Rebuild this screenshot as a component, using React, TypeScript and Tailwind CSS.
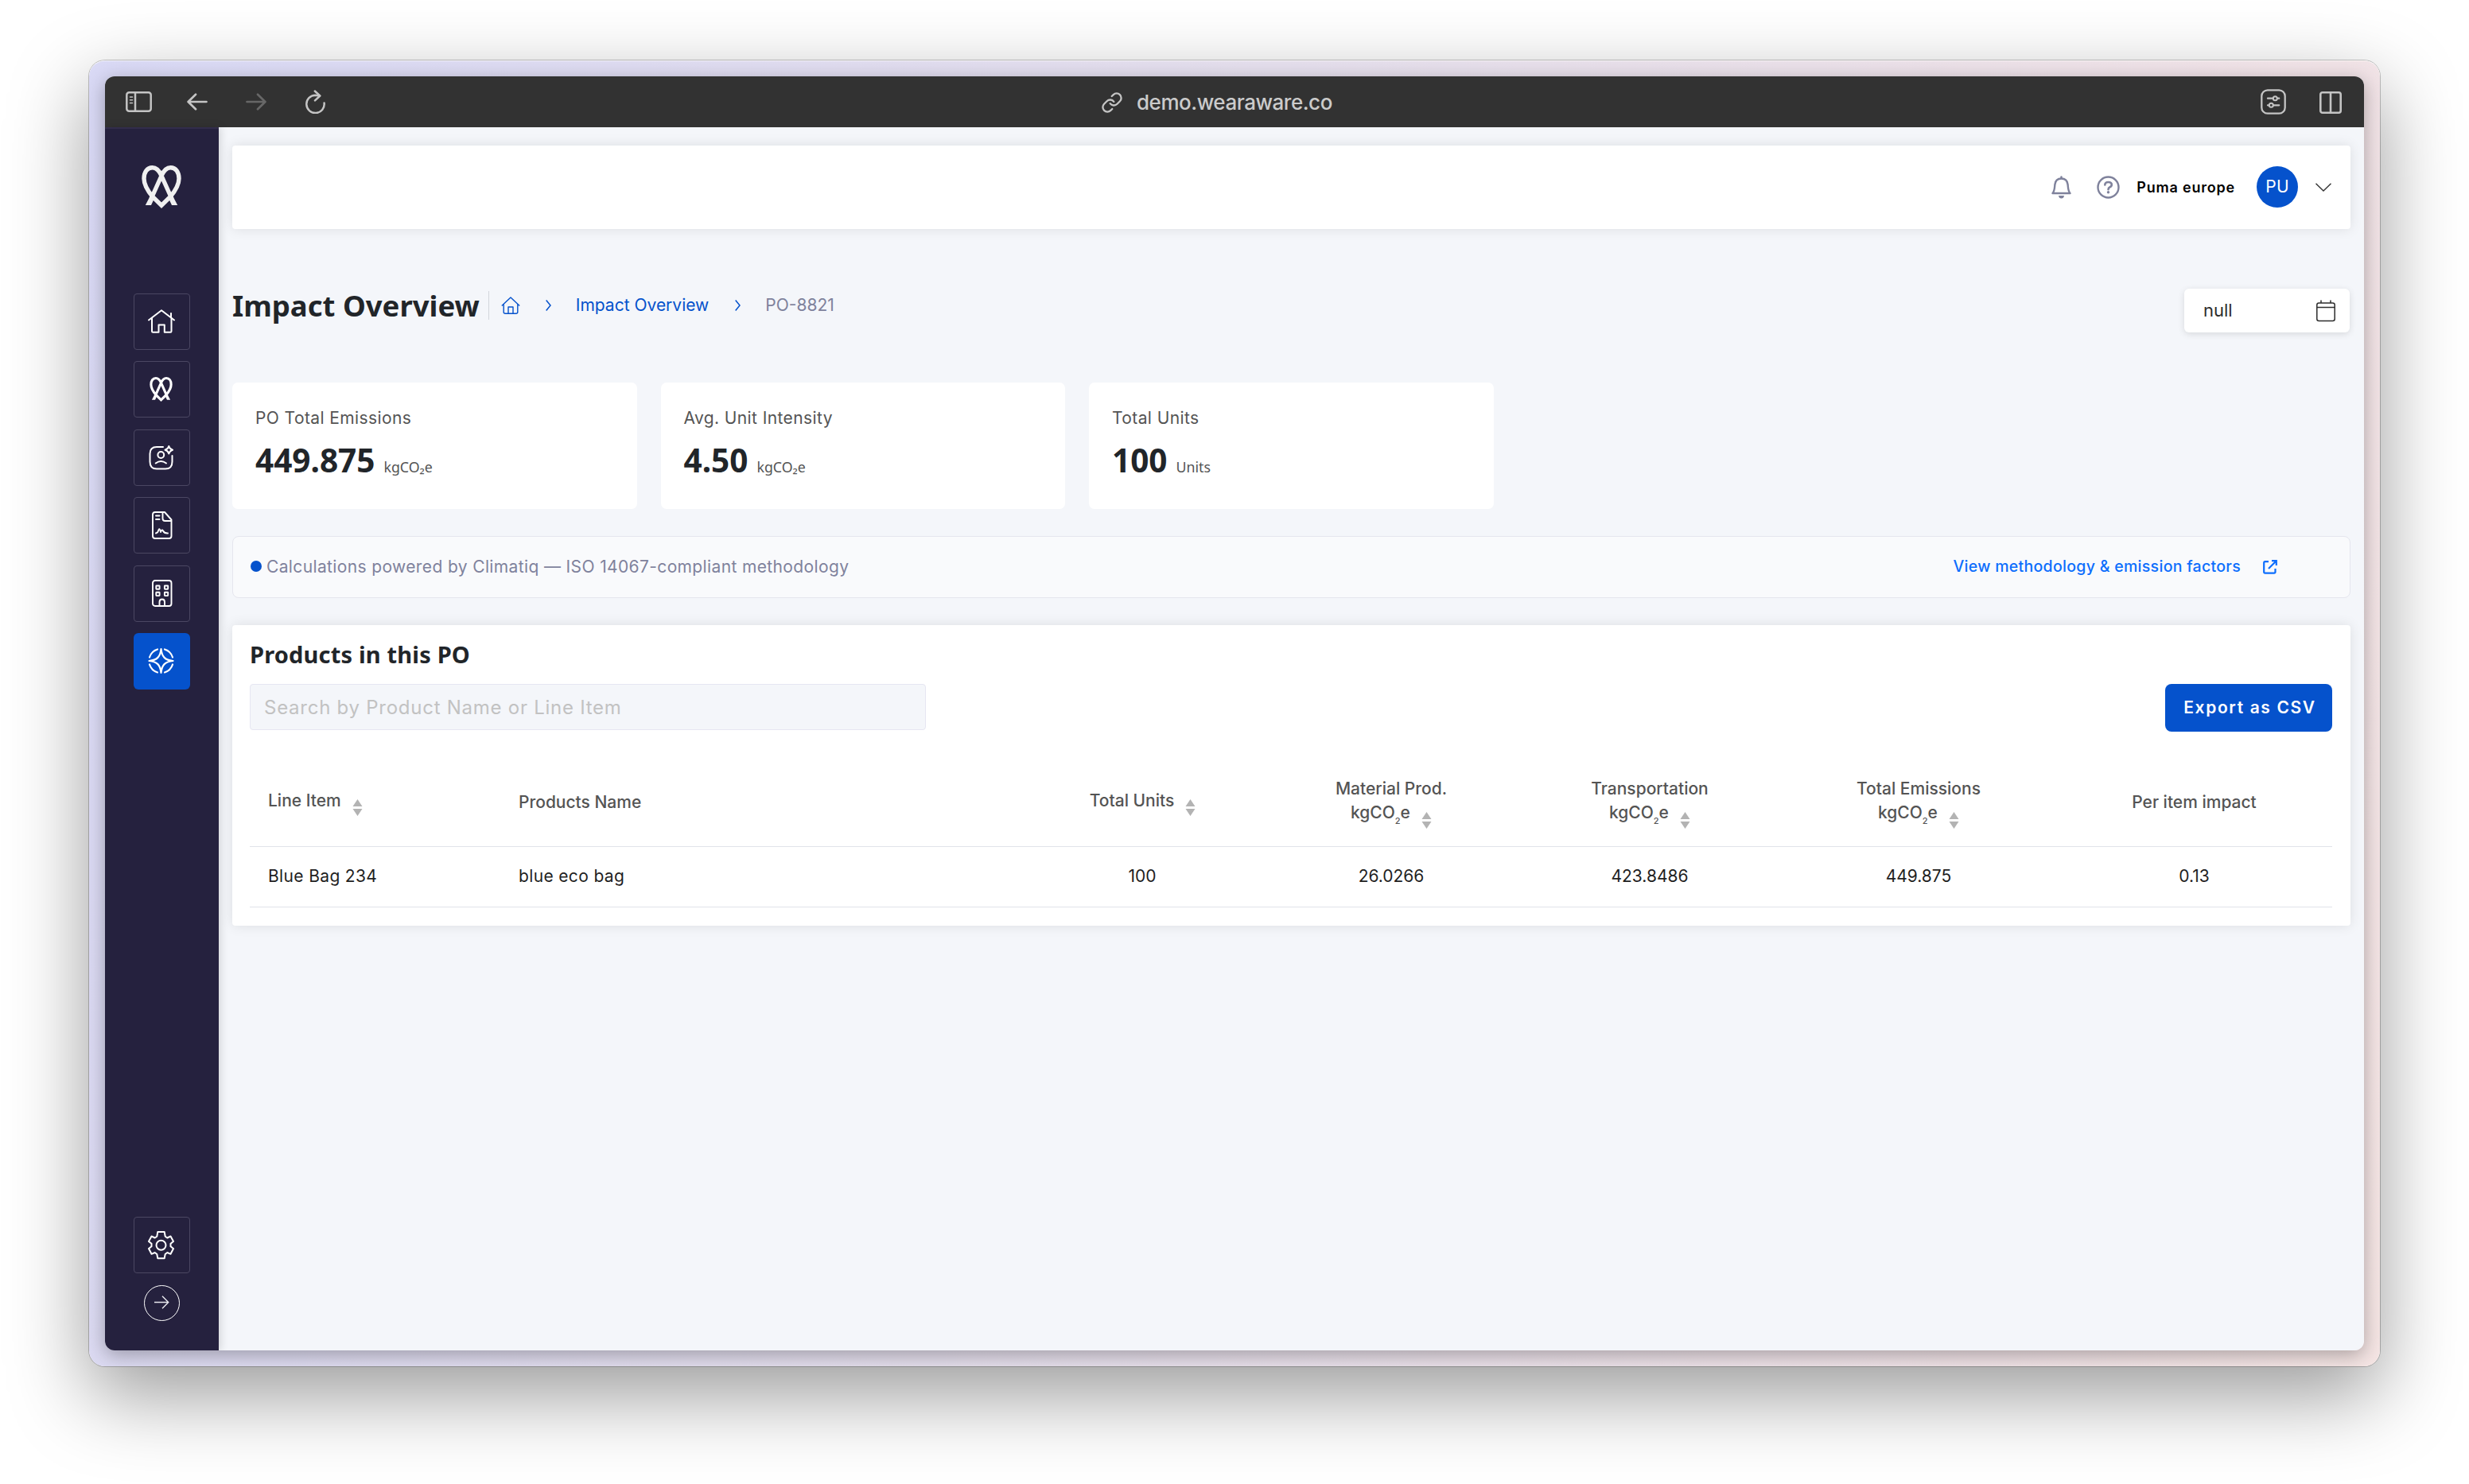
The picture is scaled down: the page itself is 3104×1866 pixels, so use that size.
import type { ReactNode } from "react"
import { Link } from "lucide-react"

function Logo({ className, color = "#ffffff" }: { className: string; color?: string }) {
  return (
    <svg className={className} viewBox="0 0 50 54" fill="none">
      <g stroke={color} strokeWidth="5.4" strokeLinejoin="miter">
        <path d="M12 42 L25 13 C28 6 31.5 2.7 36.5 2.7 C43 2.7 47 8.5 47 16.5 C47 25.5 41.5 33 36 39.5 L25 50.2 L14 39.5 C8.500 33 3 25.500 3 16.500 C3 8.500 7 2.700 13.500 2.700 C18.500 2.700 22 6 25 13 L38 42" />
      </g>
      <path d="M10.500 39 L4.800 50 H12 L16.500 40.500 Z M39.500 39 L45.200 50 H38 L33.500 40.500 Z" fill={color} />
    </svg>
  )
}

/* Sidebar icons */
const HomeIcon = () => (
  <svg className="mb-[2px] h-[30px] w-[34px]" viewBox="0 0 34 30" fill="none" stroke="#fff" strokeWidth="2" strokeLinecap="round" strokeLinejoin="round">
    <path d="M1 13.500 L17 1.200 L33 13.500 M29 10 V5" />
    <path d="M5 11.500 V27.500 Q5 28.800 6.300 28.800 H13.500 V19.500 H20.800 V28.800 H28.200 Q29.500 28.800 29.500 27.500 V11.500" />
  </svg>
)

const PersonIcon = () => (
  <svg className="h-[31px] w-[31px]" viewBox="0 0 31 31" fill="none" stroke="#fff" strokeWidth="2" strokeLinecap="round" strokeLinejoin="round">
    <path d="M18 2 H10 Q1.500 2 1.500 10.500 V20.500 Q1.500 29.500 10 29.500 H21 Q29.500 29.500 29.500 20.500 V13" />
    <circle cx="15.300" cy="12" r="3.900" />
    <path d="M8.700 22.500 Q15.300 17.500 22 22.500" />
    <path d="M25.300 1 Q26.300 4.800 30 5.700 Q26.300 6.700 25.300 10.500 Q24.300 6.700 20.500 5.700 Q24.300 4.800 25.300 1 Z" />
  </svg>
)

const DocIcon = () => (
  <svg className="ml-[3px] h-[35px] w-[26px]" viewBox="0 0 26 35" fill="none" stroke="#fff" strokeWidth="1.900" strokeLinecap="round" strokeLinejoin="round">
    <path d="M16 1 H4 Q1 1 1 4 V31 Q1 34 4 34 H21.500 Q24.500 34 24.500 31 V10.500 Z" />
    <path d="M13.500 1.500 V9 Q13.500 12 16.500 12 H24" />
    <path d="M5 5.500 H9.500 M5 10 H9.500" />
    <path d="M5 27.500 Q7.500 27 8 24.500 Q9.500 19.500 11 26 Q12.500 22 14 24.500 Q15.500 27.800 20 27.500" />
  </svg>
)

const BuildingIcon = () => (
  <svg className="ml-[3px] h-[34px] w-[26px]" viewBox="0 0 26 34" fill="none" stroke="#fff" strokeWidth="1.900" strokeLinejoin="round">
    <rect x="1" y="1" width="23.500" height="32" rx="3" />
    <rect x="5.300" y="7.500" width="4.300" height="4.300" rx="0.500" />
    <rect x="15.900" y="7.500" width="4.300" height="4.300" rx="0.500" />
    <rect x="5.300" y="15.800" width="4.300" height="4.300" rx="0.500" />
    <rect x="15.900" y="15.800" width="4.300" height="4.300" rx="0.500" />
    <path d="M9.500 33 V28 Q9.500 24.500 12.800 24.500 Q16 24.500 16 28 V33" />
  </svg>
)

const CompassIcon = () => (
  <svg className="h-[34px] w-[33px]" viewBox="0 0 33 34" fill="none" stroke="#fff" strokeWidth="2.200" strokeLinecap="round" strokeLinejoin="round">
    <path d="M16.500 2 C17.500 12 21.500 16 31.500 17 C21.500 18 17.500 22 16.500 32 C15.500 22 11.500 18 1.500 17 C11.500 16 15.500 12 16.500 2 Z" />
    <path d="M21 2.500 A15.200 15.200 0 0 1 31 12.500 M31 21.500 A15.200 15.200 0 0 1 21 31.500 M12 31.500 A15.200 15.200 0 0 1 2 21.500 M2 12.500 A15.200 15.200 0 0 1 12 2.500" />
  </svg>
)

const GearIcon = () => (
  <svg className="h-[36px] w-[33px]" viewBox="0 0 33 36" fill="none" stroke="#fff" strokeWidth="2" strokeLinejoin="round">
    <path d="M12.300 1 H20.700 L21.700 6.700 L24.300 8.500 L28.500 6.500 L32 13 L28.500 15.800 V19.300 L32 22 L28.500 28.800 L24.300 27 L21.700 29 L20.700 34.300 H12.300 L11.300 29 L8.700 27 L4.500 28.800 L1 22 L4.500 19.300 V15.800 L1 13 L4.500 6.500 L8.700 8.500 L11.300 6.700 Z" />
    <circle cx="16.500" cy="17.700" r="6" />
  </svg>
)

function Toolbar() {
  return (
    <div className="flex h-[64px] items-center bg-[#323232] pr-[28px] pl-[26px] text-[#c4c4c4]">
      <div className="flex w-[1226px] items-center">
        <svg className="h-[26px] w-[33px]" viewBox="0 0 33 26" fill="none" stroke="currentColor" strokeWidth="2.500" strokeLinecap="round">
          <rect x="1.300" y="1.300" width="30.400" height="23.400" rx="3" />
          <path d="M12 1.500 V24.500" />
          <path d="M5.500 7 H8.500 M5.500 10.700 H8.500 M5.500 14.500 H8.500" strokeWidth="1.600" />
        </svg>
        <svg className="ml-[44px] h-[22px] w-[26px]" viewBox="0 0 26 22" fill="none" stroke="currentColor" strokeWidth="2.700" strokeLinecap="round" strokeLinejoin="round">
          <path d="M24.500 11 H1.800 M11 1.800 L1.600 11 L11 20.200" />
        </svg>
        <svg className="ml-[48px] h-[22px] w-[26px] text-[#676767]" viewBox="0 0 26 22" fill="none" stroke="currentColor" strokeWidth="2.700" strokeLinecap="round" strokeLinejoin="round">
          <path d="M1.500 11 H24.200 M15 1.800 L24.400 11 L15 20.200" />
        </svg>
        <svg className="ml-[49px] h-[30px] w-[26px]" viewBox="0 0 26 30" fill="none" stroke="currentColor" strokeWidth="2.500" strokeLinecap="round" strokeLinejoin="round">
          <path d="M23.600 16.500 A11.200 11.200 0 1 1 12.400 6.700 L18 7.500" />
          <path d="M11.800 1.500 L18.300 7.500 L12 13.300" />
        </svg>
      </div>
      <Link className="mt-[2px] h-[28px] w-[28px]" strokeWidth={2} />
      <span className="mt-[2px] ml-[17px] text-[26px] leading-none font-medium tracking-[-0.470px] text-[#cbcbcb]">demo.wearaware.co</span>
      <svg className="ml-auto h-[32px] w-[32px]" viewBox="0 0 32 32" fill="none" stroke="currentColor" strokeWidth="2.300" strokeLinecap="round">
        <rect x="1.300" y="1.300" width="29.400" height="29.400" rx="7.500" />
        <path d="M9 11.700 H15.500 M21 11.700 H23.200 M9 20.300 H10.300 M16.300 20.300 H23.200" />
        <circle cx="18.300" cy="11.700" r="2.500" strokeWidth="2" />
        <circle cx="13.300" cy="20.300" r="2.500" strokeWidth="2" />
      </svg>
      <svg className="mt-px ml-[42px] h-[28px] w-[28px]" viewBox="0 0 28 28" fill="none" stroke="currentColor" strokeWidth="2.600">
        <rect x="1.300" y="1.300" width="25.400" height="25.400" rx="2.500" />
        <path d="M14 1.500 V26.500" />
      </svg>
    </div>
  )
}

const navItems: { name: string; icon: ReactNode; active?: boolean }[] = [
  { name: "home", icon: <HomeIcon /> },
  { name: "brand", icon: <Logo className="h-[31px] w-[29px]" /> },
  { name: "people", icon: <PersonIcon /> },
  { name: "reports", icon: <DocIcon /> },
  { name: "suppliers", icon: <BuildingIcon /> },
  { name: "impact", icon: <CompassIcon />, active: true },
]

function Sidebar() {
  return (
    <aside className="z-10 flex w-[143px] flex-col items-center border-t-2 border-[#322d4b] bg-[#25213e] pt-[46px] pb-[37px] shadow-[2px_0_10px_rgba(0,0,0,0.15)]">
      <Logo className="mr-px h-[54px] w-[50px]" color="#f0f0f0" />
      <nav className="mt-[107px] flex flex-col gap-[14.4px]">
        {navItems.map((item) => (
          <a
            key={item.name}
            className={
              item.active
                ? "flex h-[71px] w-[71px] items-center justify-center rounded-[6px] bg-[#0552cc] pr-[2px]"
                : "flex h-[71px] w-[71px] items-center justify-center rounded-[4px] border border-[#4b4762] pr-[2px]"
            }
          >
            {item.icon}
          </a>
        ))}
      </nav>
      <a className="mt-auto flex h-[71px] w-[71px] items-center justify-center rounded-[4px] border border-[#4b4762] pr-[2px]">
        <GearIcon />
      </a>
      <button className="mt-[15px] flex h-[45px] w-[45px] items-center justify-center rounded-full border border-white pr-px pb-[3px]">
        <svg className="h-[17px] w-[20px]" viewBox="0 0 20 17" fill="none" stroke="#e8e8ee" strokeWidth="1.400">
          <path d="M1 8.500 H18.500 M11 0.800 L18.700 8.500 L11 16.200" />
        </svg>
      </button>
    </aside>
  )
}

function Header() {
  return (
    <header className="flex h-[105px] shrink-0 items-center justify-end rounded-[4px] bg-white pr-[24px] pb-px shadow-[0_0_16px_rgba(0,0,0,0.1)]">
      <svg className="h-[29px] w-[25px]" viewBox="0 0 25 29" fill="none" stroke="#7f829c" strokeWidth="2.400" strokeLinecap="round" strokeLinejoin="round">
        <path d="M12.500 1.500 V3" />
        <path d="M1.500 22 C4.200 19 4 14.500 4.400 11 C5 6 8 3.500 12.500 3.500 C17 3.500 20 6 20.600 11 C21 14.500 20.800 19 23.500 22 Z" />
        <path d="M9 25 H16 Q15.500 28.500 12.500 28.500 Q9.500 28.500 9 25 Z" fill="#7f829c" stroke="none" />
      </svg>
      <svg className="ml-[32px] h-[29px] w-[29px]" viewBox="0 0 29 29" fill="none" stroke="#7f829c" strokeWidth="2.400" strokeLinecap="round">
        <circle cx="14.500" cy="14.500" r="13" />
        <path d="M10.300 11.500 Q10.300 8 14.500 8 Q18.800 8 18.800 11.300 Q18.800 13.300 16.500 14.300 Q14.500 15.200 14.500 17.300" strokeWidth="2.600" />
        <circle cx="14.500" cy="20.700" r="1.700" fill="#7f829c" stroke="none" />
      </svg>
      <span className="ml-[21px] text-[18px] font-semibold tracking-[0.800px] text-black">Puma europe</span>
      <span className="ml-[27px] flex h-[52px] w-[52px] items-center justify-center rounded-full bg-[#0552cc] pb-px text-[21px] tracking-[0.300px] text-white">
        PU
      </span>
      <svg className="ml-[22px] h-[11px] w-[20px]" viewBox="0 0 20 11" fill="none" stroke="#333" strokeWidth="1.400">
        <path d="M0.500 0.700 L10 10 L19.500 0.700" />
      </svg>
    </header>
  )
}

const Chevron = () => (
  <svg className="h-[14px] w-[7px]" viewBox="0 0 7 14" fill="none" stroke="#0552cc" strokeWidth="1.500">
    <path d="M0.700 0.500 L6 7 L0.700 13.500" />
  </svg>
)

function PageTitle() {
  return (
    <div className="mt-[74px] flex h-[56px] items-start justify-between">
      <div className="flex h-[43px] items-center">
        <h1 className="font-['Noto_Sans'] text-[36.500px] leading-[42px] font-bold text-[#212529]">Impact Overview</h1>
        <span className="ml-[11px] h-[36px] w-px bg-[#d3d6dc]" />
        <svg className="ml-[15px] h-[22px] w-[24px]" viewBox="0 0 24 22" fill="none" stroke="#0552cc" strokeWidth="1.400" strokeLinejoin="round">
          <path d="M0.800 11.500 L12 0.900 L23.200 11.500" />
          <path d="M3.200 9.500 V19.300 Q3.200 21.200 5.200 21.200 H18.800 Q20.800 21.200 20.800 19.300 V9.500" />
          <path d="M9 21 V13 H15 V21" />
        </svg>
        <span className="ml-[32px]"><Chevron /></span>
        <a className="ml-[31px] text-[21px] leading-none text-[#0552cc]">Impact Overview</a>
        <span className="ml-[33px]"><Chevron /></span>
        <span className="ml-[31px] text-[21px] leading-none text-[#7f829c]">PO-8821</span>
      </div>
      <div className="mt-px mr-px flex h-[55px] w-[208px] items-center justify-between rounded-[6px] bg-white pr-[18px] pl-[24px] shadow-[0_2px_8px_rgba(0,0,0,0.12)]">
        <span className="text-[22px] text-[#2d2d2d]">null</span>
        <svg className="h-[28px] w-[24px]" viewBox="0 0 24 28" fill="none" stroke="#2d2d2d" strokeWidth="1.500">
          <rect x="0.800" y="4" width="22.400" height="22.500" rx="2.500" />
          <path d="M1 9.500 H23 M6 0.500 V4 M18 0.500 V4" />
        </svg>
      </div>
    </div>
  )
}

const stats = [
  { label: "PO Total Emissions", value: "449.875", unit: "kgCO₂e" },
  { label: "Avg. Unit Intensity", value: "4.50", unit: "kgCO₂e" },
  { label: "Total Units", value: "100", unit: "Units" },
]

function StatCards() {
  return (
    <div className="mt-[63px] flex gap-[30px]">
      {stats.map((stat) => (
        <div key={stat.label} className="h-[159px] w-[508.500px] rounded-[7px] bg-white px-[29px] pt-[28px]">
          <div className="text-[21px] leading-[33px] tracking-[0.400px] text-[#545454]">{stat.label}</div>
          <div className="mt-[12px] flex items-baseline gap-[11px] font-['Noto_Sans'] leading-[50px]">
            <span className="text-[40.500px] font-bold text-[#212529]">{stat.value}</span>
            <span className="text-[17.800px] text-[#545454]">{stat.unit}</span>
          </div>
        </div>
      ))}
    </div>
  )
}

function MethodologyBar() {
  return (
    <div className="mt-[34px] flex h-[78px] items-center rounded-[8px] border border-[#e5e6ee] bg-[#f9fafc] pr-[91px] pl-[22px]">
      <span className="mb-[3px] h-[14px] w-[14px] rounded-full bg-[#0552cc]" />
      <span className="ml-[6px] text-[21px] tracking-[0.370px] text-[#7f829c]">
        Calculations powered by Climatiq — ISO 14067-compliant methodology
      </span>
      <a className="ml-auto text-[19.500px] font-medium tracking-[0.300px] text-[#0d6efd]">View methodology &amp; emission factors</a>
      <svg className="ml-[28px] h-[18px] w-[18px]" viewBox="0 0 18 18" fill="none" stroke="#0d6efd" strokeWidth="2.200">
        <path d="M7 2.200 H2.800 Q1.200 2.200 1.200 3.800 V15 Q1.200 16.700 2.800 16.700 H13.800 Q15.500 16.700 15.500 15 V11" />
        <path d="M11 1.200 H16.800 V7 M16.500 1.500 L7 11" />
      </svg>
    </div>
  )
}

const SortArrows = () => (
  <svg className="mt-[14px] h-[21px] w-[13px] shrink-0" viewBox="0 0 13 21" fill="#b3b3b3">
    <path d="M6.500 0 L12.500 9 H0.500 Z M0.500 12 H12.500 L6.500 21 Z" />
  </svg>
)

const Kg = () => (
  <span className="leading-[30.500px]">
    kgCO<span className="relative top-[7px] text-[11px] leading-none">2</span>e
  </span>
)

const emissionColumns = ["Material Prod.", "Transportation", "Total Emissions"]

const rows = [["Blue Bag 234", "blue eco bag", "100", "26.0266", "423.8486", "449.875", "0.13"]]

function ProductsTable() {
  return (
    <section className="mt-[34px] flex h-[378px] flex-col rounded-[4px] bg-white pt-[17px] pr-[23px] pl-[22px] shadow-[0_0_16px_rgba(0,0,0,0.1)]">
      <h2 className="font-['Noto_Sans'] text-[29px] leading-[40px] font-bold tracking-[0.180px] text-[#212529]">Products in this PO</h2>
      <div className="mt-[17px] flex h-[60px] items-start justify-between">
        <div className="flex h-[58px] w-[850px] items-center rounded-[4px] border border-[#e6e6f2] bg-[#f4f6fa] pt-px pl-[17px] text-[24px] tracking-[0.740px] text-[#c2c2c2]">
          Search by Product Name or Line Item
        </div>
        <button className="flex h-[60px] w-[210px] items-center justify-center rounded-[8px] bg-[#0552cc] pl-[3px] text-[21px] font-semibold tracking-[1.640px] whitespace-nowrap text-white">
          Export as CSV
        </button>
      </div>

      <div className="mt-[33px] grid h-[112px] grid-cols-[315px_654px_306px_320px_330px_346px_347px] items-center border-b border-[#e1e3ea] text-[21px] font-medium text-[#545454]">
        <div className="flex h-[35px] items-start gap-[14px] pl-[23px]">
          <span className="leading-[31px]">Line Item</span>
          <SortArrows />
        </div>
        <div className="pl-[23px]">Products Name</div>
        <div className="flex h-[35px] items-start justify-center gap-[14px] pl-px">
          <span className="leading-[31px]">Total Units</span>
          <SortArrows />
        </div>
        {emissionColumns.map((name) => (
          <div key={name} className="flex h-[64px] flex-col items-center">
            <span className="leading-[30.500px]">{name}</span>
            <span className="flex h-[30px] items-start gap-[14px]">
              <Kg />
              <SortArrows />
            </span>
          </div>
        ))}
        <div className="text-center">Per item impact</div>
      </div>

      {rows.map((row) => (
        <div
          key={row[0]}
          className="grid h-[76px] grid-cols-[315px_654px_306px_320px_330px_346px_347px] items-center border-b border-[#e1e3ea] pb-[2px] text-[21px] text-[#1f1f1f]"
        >
          {row.map((cell, i) => (
            <div key={i} className={i < 2 ? "pl-[23px] tracking-[0.350px]" : "text-center"}>
              {cell}
            </div>
          ))}
        </div>
      ))}
    </section>
  )
}

export default function App() {
  return (
    <div className="h-[1866px] w-[3104px] overflow-hidden bg-white px-[112px] pt-[76px] font-['Inter',sans-serif]">
      <div className="h-[1642px] w-[2880px] rounded-[20px] shadow-[0_36px_100px_rgba(0,0,0,0.4),0_0_0_1px_rgba(0,0,0,0.22)]">
        <div className="h-full overflow-hidden rounded-[20px] border-t border-white/60 bg-linear-[105deg,#d9d9f5,#e4deec_45%,#f0e2e6_85%,#f5e5e4] px-[20px] pt-[19px]">
          <div className="rounded-[12px] shadow-[0_6px_24px_rgba(0,0,0,0.3)]">
            <div className="flex h-[1602px] flex-col overflow-hidden rounded-[12px] bg-[#f4f6fa]">
              <Toolbar />
              <div className="flex flex-1">
                <Sidebar />
                <main className="flex flex-1 flex-col px-[17px] pt-[23px]">
                  <Header />
                  <PageTitle />
                  <StatCards />
                  <MethodologyBar />
                  <ProductsTable />
                </main>
              </div>
            </div>
          </div>
        </div>
      </div>
    </div>
  )
}
